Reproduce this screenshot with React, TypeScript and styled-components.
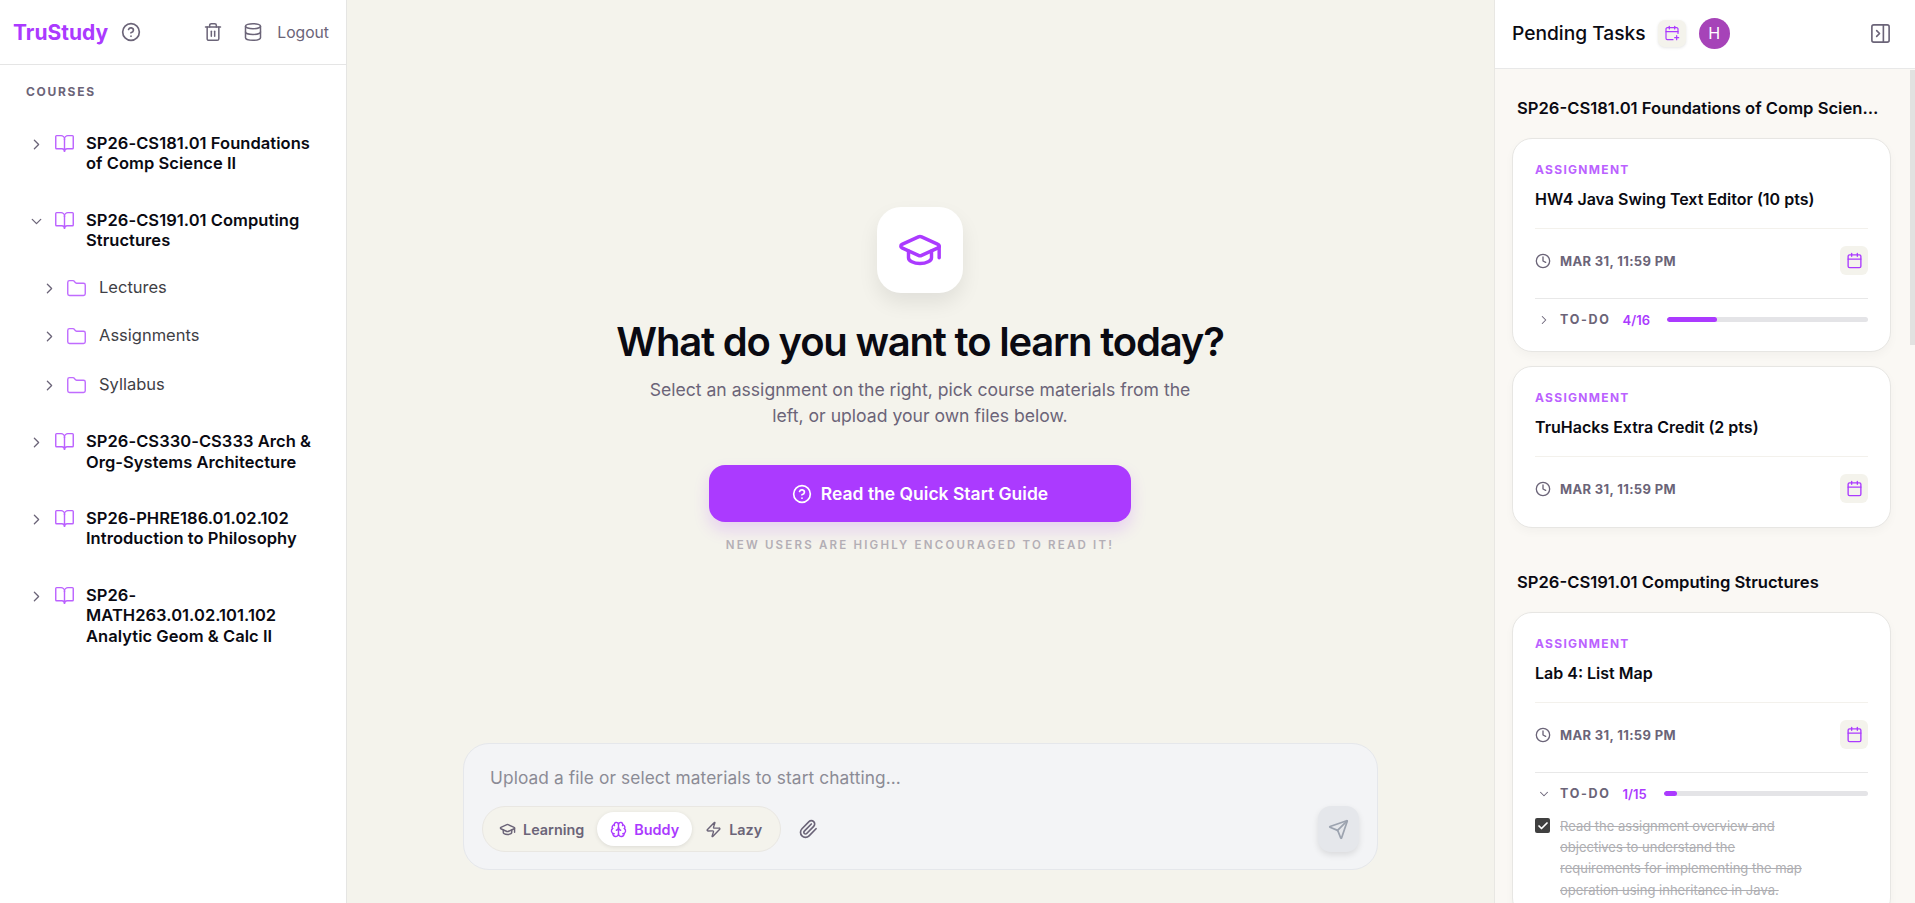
import { createGlobalStyle, styled } from 'styled-components';
import {
  BookOpen,
  Brain,
  Calendar,
  CalendarPlus,
  Check,
  ChevronDown,
  ChevronRight,
  CircleHelp,
  Clock,
  Database,
  Folder,
  GraduationCap,
  PanelRightClose,
  Paperclip,
  Send,
  Trash2,
  Zap,
} from 'lucide-react';

const PURPLE = '#ab3aff';

const GlobalStyle = createGlobalStyle`
  html, body, #root {
    height: 100%;
    margin: 0;
  }
  body {
    font-family: Inter, "Noto Sans", sans-serif;
    overflow: hidden;
    background: #f4f3ec;
  }
  * {
    box-sizing: border-box;
  }
`;

interface Course {
  name: string;
  open?: boolean;
}

const courses: Course[] = [
  { name: 'SP26-CS181.01 Foundations of Comp Science II' },
  { name: 'SP26-CS191.01 Computing Structures', open: true },
  { name: 'SP26-CS330-CS333 Arch & Org-Systems Architecture' },
  { name: 'SP26-PHRE186.01.02.102 Introduction to Philosophy' },
  { name: 'SP26-MATH263.01.02.101.102 Analytic Geom & Calc II' },
];

const folders = ['Lectures', 'Assignments', 'Syllabus'];

const CardDate = () => (
  <DateRow>
    <DateLabel>
      <Clock size={16} strokeWidth={2} />
      MAR 31, 11:59 PM
    </DateLabel>
    <CalButton>
      <Calendar size={17} strokeWidth={1.9} />
    </CalButton>
  </DateRow>
);

export default function App() {
  return (
    <Root>
      <GlobalStyle />

      <Sidebar>
        <SideHeader>
          <Logo>TruStudy</Logo>
          <HelpIcon size={20} strokeWidth={2} />
          <HeaderRight>
            <Trash2 size={20} strokeWidth={1.8} />
            <Database size={20} strokeWidth={1.8} />
            <Logout>Logout</Logout>
          </HeaderRight>
        </SideHeader>

        <SideLabel>COURSES</SideLabel>

        <Tree>
          {courses.map((course) => (
            <div key={course.name}>
              <CourseRow>
                <Chevron>
                  {course.open ? <ChevronDown size={17} strokeWidth={1.8} /> : <ChevronRight size={17} strokeWidth={1.8} />}
                </Chevron>
                <CourseIcon size={21} strokeWidth={1.6} />
                <CourseName>{course.name}</CourseName>
              </CourseRow>
              {course.open && (
                <FolderList>
                  {folders.map((folder) => (
                    <FolderRow key={folder}>
                      <ChevronRight size={17} strokeWidth={1.8} />
                      <FolderIcon size={21} strokeWidth={1.6} />
                      <span>{folder}</span>
                    </FolderRow>
                  ))}
                </FolderList>
              )}
            </div>
          ))}
        </Tree>
      </Sidebar>

      <Main>
        <Hero>
          <HeroIcon>
            <GraduationCap size={46} strokeWidth={1.8} color={PURPLE} />
          </HeroIcon>
          <Heading>What do you want to learn today?</Heading>
          <Subtitle>
            Select an assignment on the right, pick course materials from the
            <br />
            left, or upload your own files below.
          </Subtitle>
          <GuideButton>
            <CircleHelp size={20} strokeWidth={2} />
            Read the Quick Start Guide
          </GuideButton>
          <Caption>NEW USERS ARE HIGHLY ENCOURAGED TO READ IT!</Caption>
        </Hero>

        <Composer>
          <Placeholder>Upload a file or select materials to start chatting...</Placeholder>
          <ComposerRow>
            <ModePill>
              <ModeButton>
                <GraduationCap size={17} strokeWidth={2} />
                Learning
              </ModeButton>
              <ModeButton $active>
                <Brain size={17} strokeWidth={2} />
                Buddy
              </ModeButton>
              <ModeButton>
                <Zap size={17} strokeWidth={2} />
                Lazy
              </ModeButton>
            </ModePill>
            <ClipIcon size={20} strokeWidth={2} />
            <SendButton>
              <Send size={21} strokeWidth={2} />
            </SendButton>
          </ComposerRow>
        </Composer>
      </Main>

      <TaskPanel>
        <PanelHeader>
          <PanelTitle>Pending Tasks</PanelTitle>
          <AddCalButton>
            <CalendarPlus size={16} strokeWidth={1.8} />
          </AddCalButton>
          <Avatar>H</Avatar>
          <CloseIcon size={23} strokeWidth={1.7} />
        </PanelHeader>

        <PanelBody>
          <ScrollThumb />
          <SectionTitle>SP26-CS181.01 Foundations of Comp Science II</SectionTitle>
          <CardStack>
            <TaskCard>
              <Kind>ASSIGNMENT</Kind>
              <TaskTitle>HW4 Java Swing Text Editor (10 pts)</TaskTitle>
              <CardDate />
              <TodoRow>
                <ChevronRight size={14} strokeWidth={1.8} />
                <TodoLabel>TO-DO</TodoLabel>
                <TodoCount>4/16</TodoCount>
                <Track>
                  <Fill style={{ width: `${(4 / 16) * 100}%` }} />
                </Track>
              </TodoRow>
            </TaskCard>
            <TaskCard>
              <Kind>ASSIGNMENT</Kind>
              <TaskTitle>TruHacks Extra Credit (2 pts)</TaskTitle>
              <CardDate />
            </TaskCard>
          </CardStack>

          <SecondTitle>SP26-CS191.01 Computing Structures</SecondTitle>
          <CardStack>
            <TaskCard>
              <Kind>ASSIGNMENT</Kind>
              <TaskTitle>Lab 4: List Map</TaskTitle>
              <CardDate />
              <TodoRow>
                <ChevronDown size={14} strokeWidth={1.8} />
                <TodoLabel>TO-DO</TodoLabel>
                <TodoCount>1/15</TodoCount>
                <Track>
                  <Fill style={{ width: `${(1 / 15) * 100}%` }} />
                </Track>
              </TodoRow>
              <TodoItem>
                <CheckBox>
                  <Check size={12} strokeWidth={3.5} />
                </CheckBox>
                <DoneText>
                  Read the assignment overview and objectives to understand the requirements for implementing the map
                  operation using inheritance in Java.
                </DoneText>
              </TodoItem>
            </TaskCard>
          </CardStack>
        </PanelBody>
      </TaskPanel>
    </Root>
  );
}

const Root = styled.div`
  display: grid;
  grid-template-columns: 347px 1fr 421px;
  height: 903px;
  overflow: hidden;
`;

const Sidebar = styled.aside`
  background: #fff;
  border-right: 1px solid #e5e5e3;
  overflow: hidden;
`;

const SideHeader = styled.header`
  display: flex;
  align-items: center;
  height: 65px;
  padding: 0 17px 0 13px;
  border-bottom: 1px solid #e5e5e5;
  color: #6b6478;
`;

const Logo = styled.div`
  font-size: 21px;
  font-weight: 700;
  color: ${PURPLE};
`;

const HelpIcon = styled(CircleHelp)`
  margin-left: 13px;
`;

const HeaderRight = styled.div`
  display: flex;
  align-items: center;
  gap: 20px;
  margin-left: auto;
`;

const Logout = styled.span`
  margin-left: -6px;
  font-size: 15.7px;
  font-weight: 400;
`;

const SideLabel = styled.div`
  padding: 20px 0 0 26px;
  font-size: 12px;
  font-weight: 700;
  line-height: 13px;
  letter-spacing: 1.7px;
  color: #6b6478;
`;

const Tree = styled.nav`
  display: flex;
  flex-direction: column;
  gap: 36px;
  padding: 35px 28px 0 28px;
`;

const CourseRow = styled.div`
  display: grid;
  grid-template-columns: 26px 32px 1fr;
  align-items: start;
`;

const Chevron = styled.span`
  display: flex;
  padding-top: 3px;
  color: #6b6478;
`;

const CourseIcon = styled(BookOpen)`
  color: ${PURPLE};
  opacity: 0.8;
`;

const CourseName = styled.div`
  font-size: 16.5px;
  font-weight: 600;
  line-height: 20.4px;
  letter-spacing: 0.05px;
  color: #0a0a12;
`;

const FolderList = styled.div`
  display: flex;
  flex-direction: column;
  gap: 25.5px;
  margin-top: 26px;
  margin-bottom: -1.5px;
  padding-left: 13px;
`;

const FolderRow = styled.div`
  display: flex;
  align-items: center;
  height: 23px;
  font-size: 16.5px;
  color: #3f3f46;

  > svg:first-child {
    margin-right: 8px;
    color: #6b6478;
  }

  > span {
    margin-left: 12px;
    margin-top: -3px;
  }
`;

const FolderIcon = styled(Folder)`
  color: ${PURPLE};
  opacity: 0.75;
`;

const Main = styled.main`
  display: flex;
  flex-direction: column;
  align-items: center;
  background: #f4f3ec;
`;

const Hero = styled.section`
  display: flex;
  flex-direction: column;
  align-items: center;
  flex: 1;
  width: 100%;
  padding: 207px 1px 0 0;
`;

const HeroIcon = styled.div`
  display: flex;
  align-items: center;
  justify-content: center;
  width: 86px;
  height: 86px;
  background: #fff;
  border-radius: 24px;
  box-shadow: 0 10px 20px rgba(0, 0, 0, 0.08);
`;

const Heading = styled.h1`
  margin: 26px 0 0;
  font-size: 40px;
  font-weight: 600;
  line-height: 46px;
  letter-spacing: -1.2px;
  color: #0a0a12;
`;

const Subtitle = styled.p`
  margin: 12px 0 0;
  font-size: 17.6px;
  line-height: 26px;
  text-align: center;
  color: #6b6478;
`;

const GuideButton = styled.button`
  display: flex;
  align-items: center;
  justify-content: center;
  gap: 9px;
  width: 422px;
  height: 57px;
  margin-top: 36px;
  border: 0;
  border-radius: 16px;
  background: ${PURPLE};
  color: #fff;
  font-family: inherit;
  font-size: 17.5px;
  font-weight: 600;
  box-shadow: 0 8px 16px rgba(171, 58, 255, 0.18);
`;

const Caption = styled.div`
  margin-top: 16px;
  font-size: 11.5px;
  font-weight: 600;
  line-height: 14px;
  letter-spacing: 2.2px;
  color: #b3aeb5;
`;

const Composer = styled.section`
  width: 915px;
  height: 127px;
  margin-bottom: 33px;
  padding: 24px 18px 0;
  border: 1px solid #e5e7eb;
  border-radius: 26px;
  background: #f3f4f6;
`;

const Placeholder = styled.div`
  padding-left: 8px;
  font-size: 17.3px;
  line-height: 20px;
  letter-spacing: 0.1px;
  color: #8b8b95;
`;

const ComposerRow = styled.div`
  display: flex;
  align-items: center;
  margin-top: 18px;
`;

const ModePill = styled.div`
  display: flex;
  align-items: center;
  gap: 0;
  height: 46px;
  width: 299px;
  padding: 0 3px;
  border: 1px solid #e9e7e2;
  border-radius: 23px;
  background: #f4f3ec;
`;

const ModeButton = styled.div<{ $active?: boolean }>`
  display: flex;
  align-items: center;
  gap: 7px;
  height: 34px;
  padding: 0 13px;
  border-radius: 17px;
  font-size: 14.4px;
  font-weight: 600;
  color: ${(props) => (props.$active ? PURPLE : '#6b6478')};
  background: ${(props) => (props.$active ? '#fff' : 'transparent')};
  box-shadow: ${(props) => (props.$active ? '0 1px 4px rgba(0, 0, 0, 0.1)' : 'none')};
`;

const ClipIcon = styled(Paperclip)`
  margin-left: 17px;
  color: #6b6478;
`;

const SendButton = styled.div`
  display: flex;
  align-items: center;
  justify-content: center;
  width: 41px;
  height: 46px;
  margin-left: auto;
  border-radius: 13px;
  background: #e5e7eb;
  color: #9ca3af;
  box-shadow: 0 3px 6px rgba(0, 0, 0, 0.1);
`;

const TaskPanel = styled.aside`
  display: flex;
  flex-direction: column;
  height: 903px;
  border-left: 1px solid #e8e7e3;
  background: #faf8f4;
`;

const PanelHeader = styled.header`
  display: flex;
  align-items: center;
  flex-shrink: 0;
  height: 69px;
  padding: 0 23px 2px 17px;
  background: #fff;
  border-bottom: 1px solid #e8e8e8;
`;

const PanelTitle = styled.div`
  font-size: 19.2px;
  font-weight: 500;
  color: #0a0a12;
`;

const AddCalButton = styled.div`
  display: flex;
  align-items: center;
  justify-content: center;
  width: 28px;
  height: 27px;
  margin-left: 12px;
  border-radius: 7px;
  background: #f4f3ec;
  color: ${PURPLE};
  box-shadow: 0 1px 3px rgba(0, 0, 0, 0.1);
`;

const Avatar = styled.div`
  display: flex;
  align-items: center;
  justify-content: center;
  width: 31px;
  height: 31px;
  margin-left: 13px;
  border-radius: 50%;
  background: #a643b8;
  color: #fff;
  font-size: 16px;
`;

const CloseIcon = styled(PanelRightClose)`
  margin-left: auto;
  color: #6b6478;
`;

const PanelBody = styled.div`
  position: relative;
  flex: 1;
  overflow: hidden;
  padding: 28px 24px 0 17px;
`;

const ScrollThumb = styled.div`
  position: absolute;
  top: 1px;
  right: 0;
  width: 5px;
  height: 275px;
  background: #e2e2e0;
`;

const SectionTitle = styled.div`
  padding: 0 7px 0 5px;
  overflow: hidden;
  white-space: nowrap;
  text-overflow: ellipsis;
  font-size: 16.6px;
  font-weight: 600;
  line-height: 22px;
  color: #0a0a12;
`;

const SecondTitle = styled(SectionTitle)`
  margin-top: 43px;
`;

const CardStack = styled.div`
  display: flex;
  flex-direction: column;
  gap: 14px;
  margin-top: 19px;
`;

const TaskCard = styled.article`
  padding: 23px 22px 16px;
  border: 1px solid #e7e6e3;
  border-radius: 20px;
  background: #fff;
  box-shadow: 0 4px 10px rgba(0, 0, 0, 0.03);
`;

const Kind = styled.div`
  font-size: 12px;
  font-weight: 700;
  line-height: 16px;
  letter-spacing: 1.3px;
  color: ${PURPLE};
  opacity: 0.8;
`;

const TaskTitle = styled.div`
  margin-top: 10px;
  padding-bottom: 18px;
  border-bottom: 1px solid #f3f1ec;
  font-size: 16px;
  font-weight: 600;
  line-height: 22px;
  color: #0a0a12;
`;

const DateRow = styled.div`
  display: flex;
  align-items: center;
  justify-content: space-between;
  padding: 17px 0 8px;
`;

const DateLabel = styled.div`
  display: flex;
  align-items: center;
  gap: 9px;
  font-size: 13px;
  font-weight: 700;
  letter-spacing: 0.35px;
  color: #6b6478;
`;

const CalButton = styled.div`
  display: flex;
  align-items: center;
  justify-content: center;
  width: 28px;
  height: 29px;
  border-radius: 6px;
  background: #f4f3ec;
  color: ${PURPLE};
`;

const TodoRow = styled.div`
  display: flex;
  align-items: center;
  height: 37px;
  margin-top: 15px;
  padding: 5px 0 0 2px;
  border-top: 1px solid #e8e8e8;
  color: #6b6478;
`;

const TodoLabel = styled.span`
  margin-left: 9px;
  font-size: 12.5px;
  font-weight: 700;
  letter-spacing: 1.7px;
`;

const TodoCount = styled.span`
  margin-left: 12px;
  font-size: 13px;
  font-weight: 600;
  color: ${PURPLE};
`;

const Track = styled.div`
  flex: 1;
  height: 5px;
  margin-left: 17px;
  border-radius: 3px;
  background: #e4e4e7;
  overflow: hidden;
`;

const Fill = styled.div`
  height: 100%;
  border-radius: 3px;
  background: ${PURPLE};
`;

const TodoItem = styled.div`
  display: flex;
  align-items: flex-start;
  gap: 10px;
  margin-top: 7px;
`;

const CheckBox = styled.span`
  display: flex;
  align-items: center;
  justify-content: center;
  flex-shrink: 0;
  width: 15px;
  height: 15px;
  margin-top: 2px;
  border-radius: 2px;
  background: #404040;
  color: #fff;
`;

const DoneText = styled.div`
  width: 258px;
  font-size: 13px;
  line-height: 21.2px;
  color: #aeaeb2;
  text-decoration: line-through;
`;
